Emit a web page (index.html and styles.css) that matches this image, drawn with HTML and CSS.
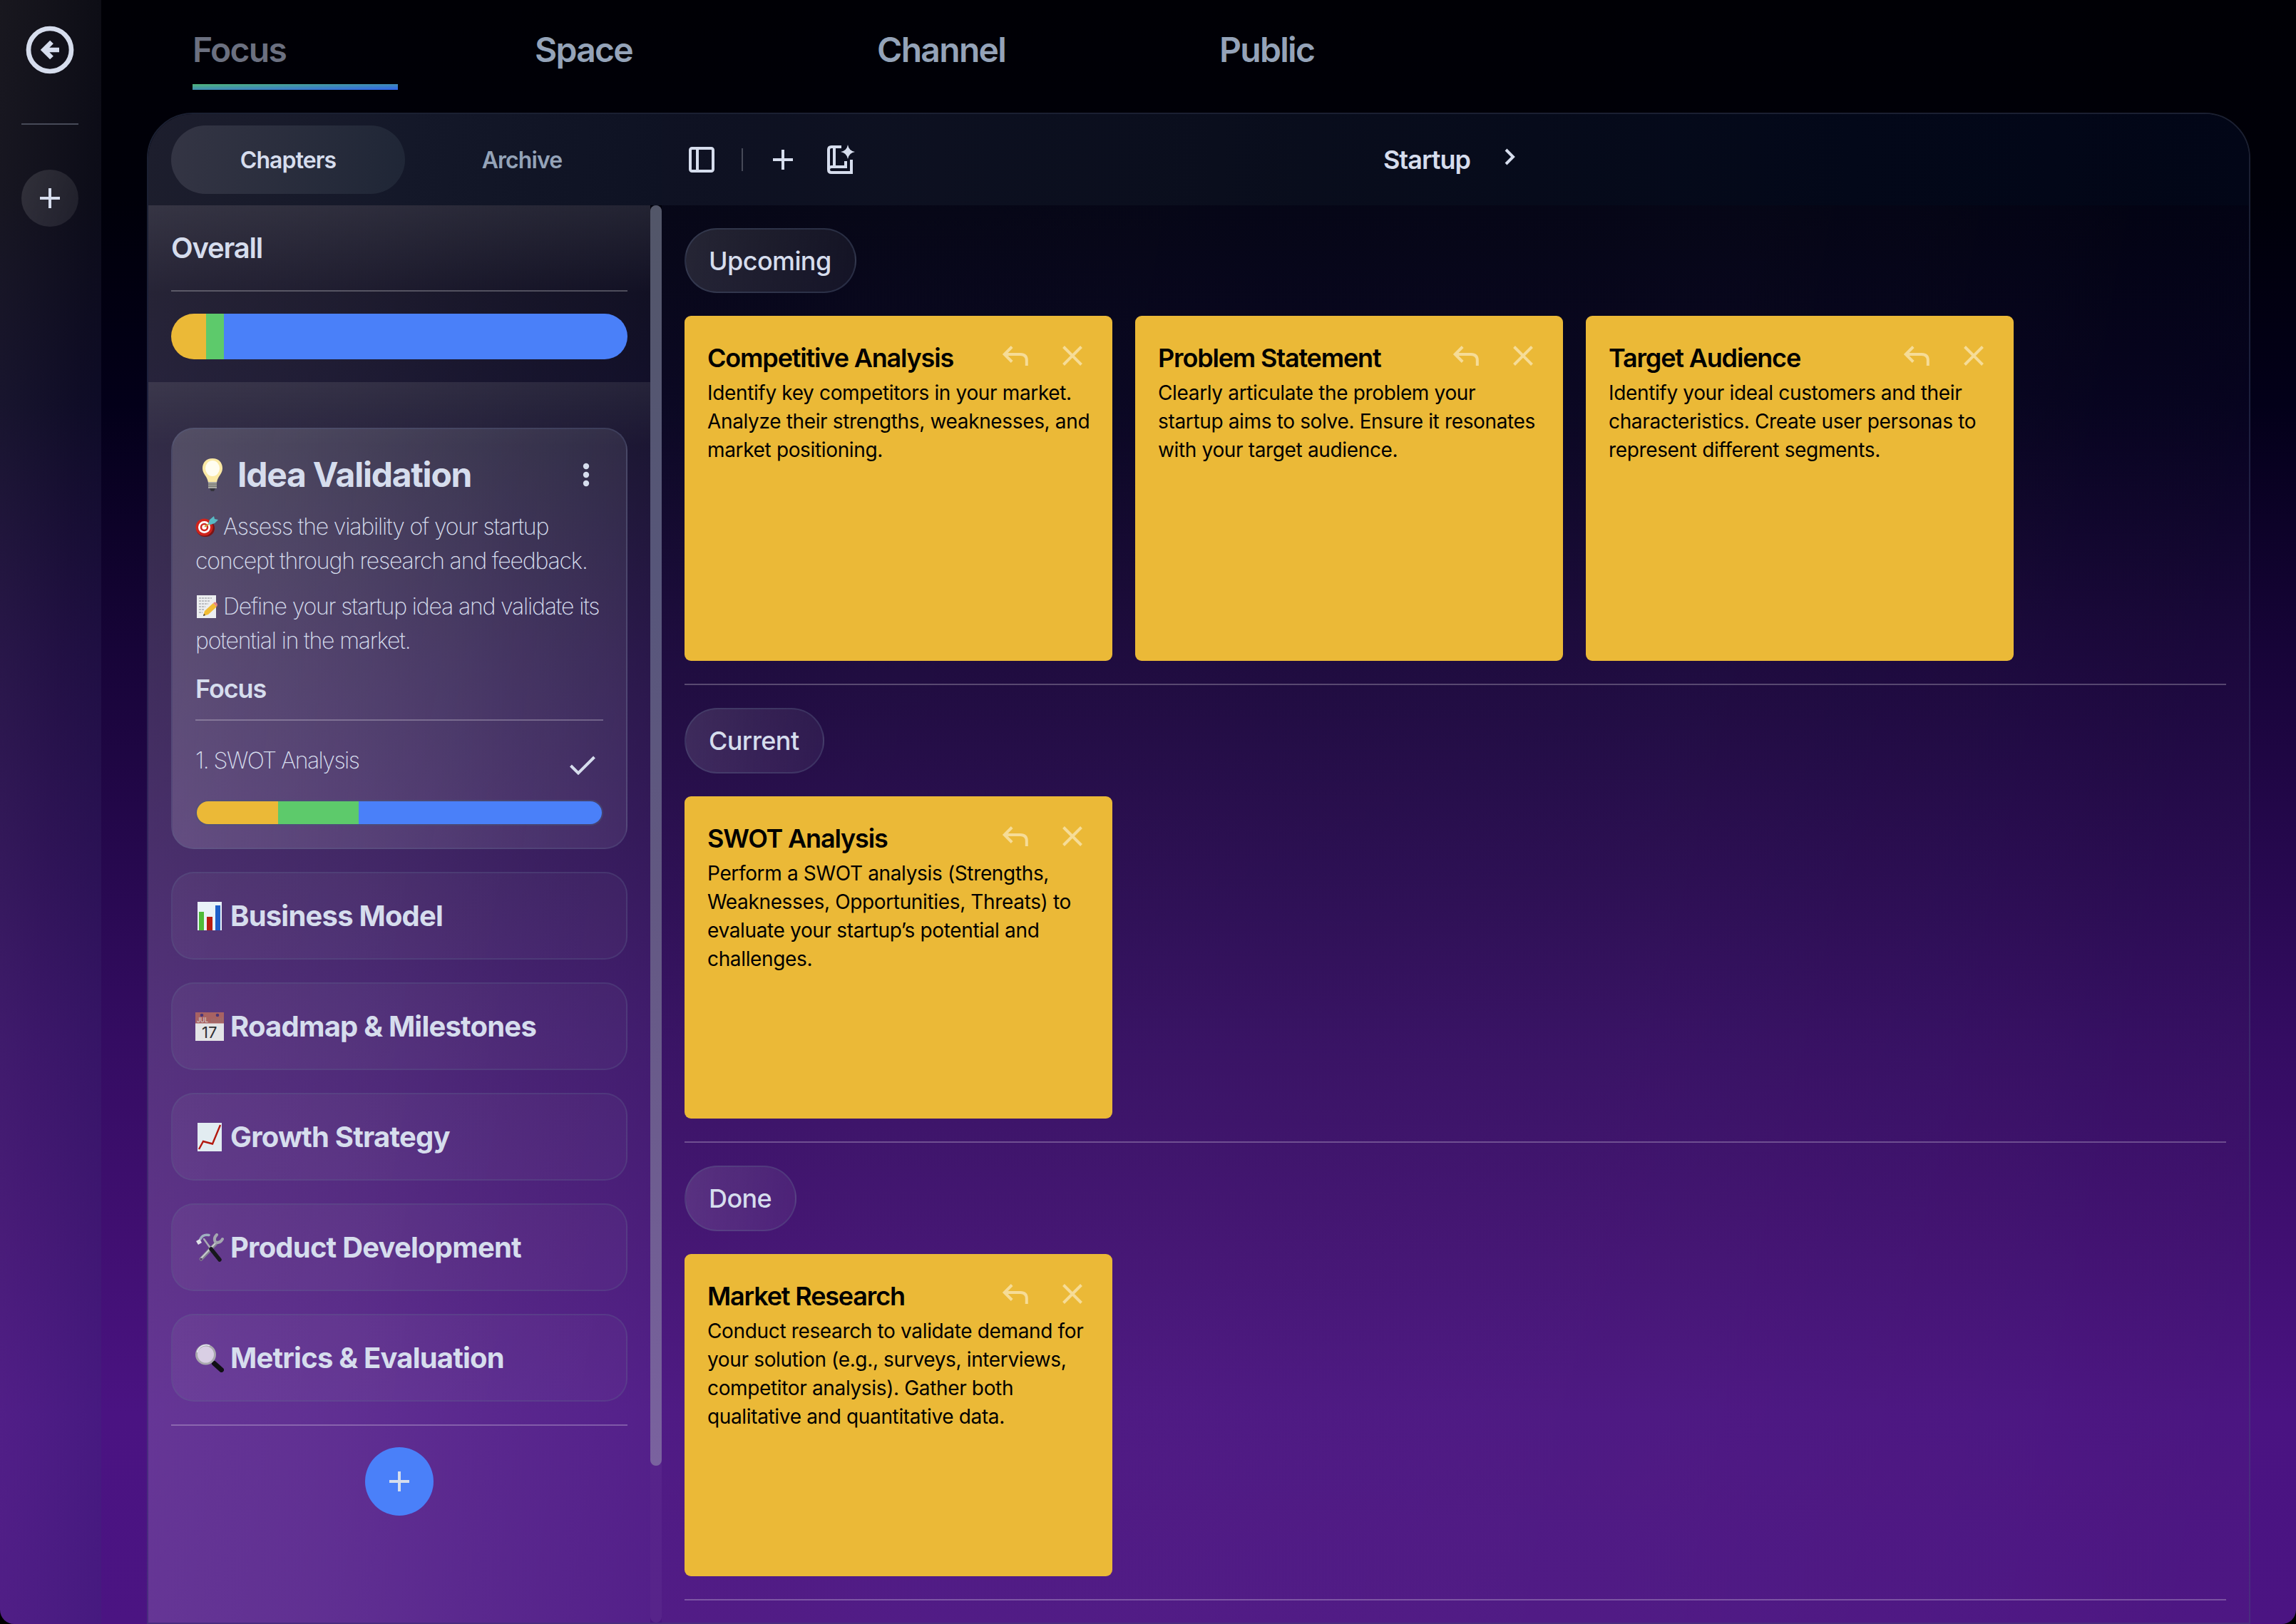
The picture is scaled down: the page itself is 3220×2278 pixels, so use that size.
FILE: index.html
```html
<!DOCTYPE html>
<html lang="en">
<head>
<meta charset="utf-8">
<title>Focus</title>
<link rel="stylesheet" href="styles.css">
</head>
<body>
<svg class="defs" aria-hidden="true">
  <symbol id="plus" viewBox="0 0 48 48"><path d="M24 10V38M10 24H38"/></symbol>
  <symbol id="close" viewBox="0 0 48 48"><path d="M11.5 11.5L36.5 36.5M36.5 11.5L11.5 36.5"/></symbol>
  <symbol id="reply" viewBox="0 0 48 48"><path d="M19.2 11.5L8.7 22L19.2 32.5M9 22H31Q39.8 22 39.8 30.5V38"/></symbol>
</svg>
<div class="app">
  <nav class="rail">
    <svg class="back" viewBox="0 0 68 68"><circle cx="34" cy="34" r="30"/><path d="M47 34H26M36.5 23L25.5 34L36.5 45"/></svg>
    <div class="rail-rule"></div>
    <button class="rail-add"><svg class="icon"><use href="#plus"/></svg></button>
  </nav>
  <div class="page">
    <div class="tabs">
      <div class="tab active">Focus</div>
      <div class="tab">Space</div>
      <div class="tab">Channel</div>
      <div class="tab">Public</div>
    </div>
    <div class="panel">
      <div class="side-head">
        <div class="seg on">Chapters</div>
        <div class="seg">Archive</div>
      </div>
      <div class="main-head">
        <div class="tools">
          <svg class="icon" viewBox="0 0 48 48"><rect x="8" y="8" width="32" height="32" rx="2.5"/><path d="M18 8V40"/></svg>
          <div class="tools-rule"></div>
          <svg class="icon"><use href="#plus"/></svg>
          <svg class="icon" viewBox="0 0 48 48"><path d="M26 6H12Q8 6 8 10V38Q8 42 12 42H40V24M16 6V34M12 34H32V26M8 38Q8 34 12 34"/><path class="solid" d="M35 3Q36.5 11.5 45 13Q36.5 14.500 35 23Q33.500 14.500 25 13Q33.500 11.500 35 3Z"/></svg>
        </div>
        <div class="crumb">Startup <svg class="icon chevron" viewBox="0 0 48 48"><path d="M18 14L28 24L18 34"/></svg></div>
      </div>
      <aside class="side">
        <div class="side-body">
          <section class="overall">
            <h2>Overall</h2>
            <div class="rule"></div>
            <div class="bar big"><i class="y" style="width:7.69%"></i><i class="g" style="width:3.85%"></i><i class="b"></i></div>
          </section>
          <section class="list">
            <article class="chapter open">
              <div class="chapter-head">
                <svg class="bulb" viewBox="0 0 48 48"><path d="M24 1C15 1 10 7 10 15C10 23 17 26 18 35H30C31 26 38 23 38 15C38 7 33 1 24 1Z" fill="#fbe9a4"/><ellipse cx="24" cy="15" rx="10" ry="11" fill="#fffdf0"/><path d="M18 34H30V43H18Z" fill="#a9a9a4"/><path d="M18 37H30M18 40H30" stroke="#77776f" stroke-width="1.500"/><path d="M20 43H28L26 47H22Z" fill="#34343c"/></svg>
                <h1>Idea Validation</h1>
                <svg class="icon dots" viewBox="0 0 48 48"><circle cx="24" cy="12" r="4.200"/><circle cx="24" cy="24" r="4.200"/><circle cx="24" cy="36" r="4.200"/></svg>
              </div>
              <p><svg class="emo" viewBox="0 0 32 32"><ellipse cx="14" cy="18" rx="13" ry="12" fill="#7d1414"/><circle cx="12.500" cy="16.500" r="12" fill="#d0241c"/><circle cx="12.500" cy="16.500" r="8.500" fill="#fff"/><circle cx="12.500" cy="16.500" r="5.800" fill="#cf2a22"/><circle cx="12.500" cy="16.500" r="3.200" fill="#fff"/><path d="M13 16L23 9" stroke="#c9a43a" stroke-width="2"/><path d="M18 12L20 6L26 1L27 5L32 6L27 11L21 13Z" fill="#58b9c4"/></svg>Assess the viability of your startup<br>concept through research and feedback.</p>
              <p><svg class="emo" viewBox="0 0 32 32"><path d="M2 0H29V32H2Z" fill="#eceef0"/><path d="M5 4H23M5 8H20M5 12H18M5 16H14M5 20H12M5 24H10" stroke="#8b8d94" stroke-width="1.200" stroke-dasharray="3 1"/><path d="M11 29L13 22L25 11L30 16L18 27Z" fill="#f2bd35"/><path d="M25 11L27 9.500Q31 10 31 14L30 16Z" fill="#e5837e"/><path d="M11 29L12 26L14 28Z" fill="#333"/></svg>Define your startup idea and validate its<br>potential in the market.</p>
              <h3>Focus</h3>
              <div class="rule"></div>
              <div class="task"><span>1. SWOT Analysis</span><svg class="icon" viewBox="0 0 48 48"><path d="M7.500 25L18 35.500L40.500 13"/></svg></div>
              <div class="bar small"><i class="y" style="width:20%"></i><i class="g" style="width:20%"></i><i class="b"></i></div>
            </article>
            <article class="chapter"><svg class="ico" viewBox="0 0 40 40"><path d="M3 0H37V40H3Z" fill="#e9f2f8"/><path d="M5 14H12V40H5Z" fill="#4fbb38"/><path d="M16 21H24V40H16Z" fill="#b81d12"/><path d="M28 5H35V40H28Z" fill="#1f5fc8"/></svg>Business Model</article>
            <article class="chapter"><svg class="ico" viewBox="0 0 40 40"><path d="M0 0H40V40H0Z" fill="#e4e4e6"/><path d="M0 0H40V15.500H0Z" fill="#a86262"/><circle cx="9" cy="4" r="2.300" fill="#4a3678"/><circle cx="31" cy="4" r="2.300" fill="#4a3678"/><path d="M23 9V14M26 8V14M29 9V14M32 8V14M35 8V14M38 7V14" stroke="#9a7070" stroke-width="1.200"/><text x="2" y="13.500" font-size="8.500" fill="#ddd">JUL</text><text x="9" y="35.500" font-size="22" fill="#2e2e30">17</text></svg>Roadmap &amp; Milestones</article>
            <article class="chapter"><svg class="ico" viewBox="0 0 40 40"><path d="M3 0H37V40H3Z" fill="#e2ecf1"/><path d="M5 37L11 26L24 29.500L35 3" fill="none" stroke="#b3190f" stroke-width="2.400"/></svg>Growth Strategy</article>
            <article class="chapter"><svg class="ico" viewBox="0 0 40 40"><g fill="none" stroke-linecap="round"><path d="M29 14L8 36" stroke="#85878f" stroke-width="5"/><path d="M28 14L8 35" stroke="#c8cad0" stroke-width="2"/><path d="M30 2Q25 7 28 12Q34 15 38 8" stroke="#a4a7b0" stroke-width="4"/><path d="M12 8L22 22" stroke="#a9abb3" stroke-width="2.500"/><path d="M22 22L34 37" stroke="#17171c" stroke-width="5.500"/><path d="M19 2.500Q10 1 7 8" stroke="#9fb0c0" stroke-width="3.500"/></g><path d="M1 11L6 8L9 13L4 16Z" fill="#dfe3e8"/><circle cx="8" cy="36" r="1.500" fill="#55386f"/></svg>Product Development</article>
            <article class="chapter"><svg class="ico" viewBox="0 0 40 40"><path d="M23 25L28 29" stroke="#888" stroke-width="4"/><path d="M26.500 27.500L36.500 36.500" stroke="#101014" stroke-width="7" stroke-linecap="round"/><circle cx="14.500" cy="15" r="13" fill="#d9cfe4" stroke="#a9a9ae" stroke-width="3"/><path d="M2.500 12A13 13 0 0 1 20 2.500" fill="none" stroke="#e8ebf5" stroke-width="1.500"/></svg>Metrics &amp; Evaluation</article>
            <div class="rule"></div>
            <button class="add"><svg class="icon"><use href="#plus"/></svg></button>
          </section>
        </div>
        <div class="track"><div class="thumb"></div></div>
      </aside>
      <main class="board">
        <section class="stage">
          <div class="pill">Upcoming</div>
          <div class="cards">
            <article class="note tall"><header><h4>Competitive Analysis</h4><svg class="icon"><use href="#reply"/></svg><svg class="icon"><use href="#close"/></svg></header>Identify key competitors in your market.<br>Analyze their strengths, weaknesses, and<br>market positioning.</article>
            <article class="note tall"><header><h4>Problem Statement</h4><svg class="icon"><use href="#reply"/></svg><svg class="icon"><use href="#close"/></svg></header>Clearly articulate the problem your<br>startup aims to solve. Ensure it resonates<br>with your target audience.</article>
            <article class="note tall"><header><h4>Target Audience</h4><svg class="icon"><use href="#reply"/></svg><svg class="icon"><use href="#close"/></svg></header>Identify your ideal customers and their<br>characteristics. Create user personas to<br>represent different segments.</article>
          </div>
        </section>
        <section class="stage">
          <div class="pill">Current</div>
          <div class="cards">
            <article class="note"><header><h4>SWOT Analysis</h4><svg class="icon"><use href="#reply"/></svg><svg class="icon"><use href="#close"/></svg></header>Perform a SWOT analysis (Strengths,<br>Weaknesses, Opportunities, Threats) to<br>evaluate your startup’s potential and<br>challenges.</article>
          </div>
        </section>
        <section class="stage">
          <div class="pill">Done</div>
          <div class="cards">
            <article class="note"><header><h4>Market Research</h4><svg class="icon"><use href="#reply"/></svg><svg class="icon"><use href="#close"/></svg></header>Conduct research to validate demand for<br>your solution (e.g., surveys, interviews,<br>competitor analysis). Gather both<br>qualitative and quantitative data.</article>
          </div>
        </section>
      </main>
    </div>
  </div>
</div>
</body>
</html>
```

FILE: styles.css
```css
* { box-sizing: border-box; margin: 0; padding: 0; }

body {
  height: 2278px;
  overflow: hidden;
  font-family: Inter, "Liberation Sans", sans-serif;
  color: #d6dded;
  background: #000;
}

.defs { display: none; }

.icon {
  width: 48px;
  height: 48px;
  flex: none;
  fill: none;
  stroke: currentColor;
  stroke-width: 4;
}
.solid { fill: currentColor; stroke: none; }

button { border: 0; color: inherit; display: grid; place-items: center; border-radius: 50%; }

.app {
  display: grid;
  grid-template-columns: 142px 1fr;
  height: 2278px;
  border-radius: 0 0 20px 20px;
  overflow: hidden;
  background: linear-gradient(180deg, #000005 0%, #000009 12%, #030019 25%, #170438 40%, #26084e 53%, #340c62 64%, #400f71 76%, #4a1382 87%, #4b1482 100%);
}

/* left rail */
.rail {
  display: flex;
  flex-direction: column;
  align-items: center;
  padding: 36px 2px 0 0;
  background: linear-gradient(94deg, rgba(225, 215, 240, .11), rgba(140, 140, 180, .09) 50%, rgba(40, 60, 110, .14));
}
.back { width: 68px; height: 68px; fill: none; stroke: currentColor; stroke-width: 6.700; }
.rail-rule { width: 80px; height: 2px; margin: 69px 0 63px; background: #474a58; }
.rail-add { width: 80px; height: 80px; background: linear-gradient(110deg, rgba(255, 255, 255, .12), rgba(255, 255, 255, .07)); }

.page { display: grid; grid-template-rows: 158px 1fr; padding: 0 64px; min-height: 0; }

/* top tabs */
.tabs { display: flex; gap: 192px; padding-left: 64px; }
.tab {
  width: 288px;
  height: 126px;
  padding-top: 38px;
  font-size: 48px;
  font-weight: 600;
  line-height: 64px;
  letter-spacing: -1.700px;
  color: #94a3b8;
}
.tab.active {
  color: #6b7080;
  background: linear-gradient(to bottom right, #50b678, #2f63ee) bottom / 100% 8px no-repeat;
}

/* panel */
.panel {
  display: grid;
  grid-template: 128px 1fr / 720px 1fr;
  border: 2px solid rgba(71, 85, 120, .38);
  border-radius: 64px 64px 0 0;
  overflow: hidden;
  min-height: 0;
}

.side-head {
  display: flex;
  padding: 16px 32px 0;
  background: linear-gradient(100deg, #1d1e2d, #141829 50%, #0e1223);
}
.seg {
  width: 328px;
  height: 96px;
  border-radius: 48px;
  font-size: 32px;
  font-weight: 600;
  line-height: 97px;
  letter-spacing: -.9px;
  text-align: center;
  color: #94a3b8;
}
.seg.on { color: #d6dded; background: linear-gradient(100deg, #343544, #1f2636); }

.main-head {
  display: grid;
  grid-template-columns: 1fr auto 1fr;
  align-items: center;
  padding: 0 32px;
  background: linear-gradient(90deg, #0f1223, #0a0e1d 35%, #030819 75%, #020617);
}
.tools { display: flex; align-items: center; gap: 32px; }
.tools-rule { width: 2px; height: 32px; background: #474a58; }
.crumb { display: flex; align-items: center; gap: 32px; font-size: 36px; font-weight: 600; letter-spacing: -1px; }
.chevron { margin-bottom: 8px; }

/* chapters column */
.side { display: flex; min-height: 0; }
.side-body { width: 704px; display: flex; flex-direction: column; }
.rule { height: 2px; background: rgba(255, 255, 255, .25); }

.overall {
  height: 248px;
  padding: 32px 32px 0;
  background:
    linear-gradient(180deg, rgba(215, 220, 255, .09), rgba(220, 220, 255, 0) 50%),
    linear-gradient(100deg, rgba(235, 225, 255, .16), rgba(200, 200, 255, .08));
}
.overall h2 { font-size: 40px; font-weight: 600; line-height: 56px; letter-spacing: -1.200px; margin-bottom: 31px; }

.bar { display: flex; overflow: hidden; }
.bar.big { height: 64px; margin-top: 31px; border-radius: 32px; }
.bar.small { height: 36px; border: 2px solid rgba(71, 85, 120, .5); border-radius: 18px; }
.y { background: #ebb937; }
.g { background: #5dca6b; }
.b { background: #4a80f9; flex: 1; }

.list {
  flex: 1;
  display: flex;
  flex-direction: column;
  gap: 32px;
  padding: 64px 32px 0;
  background:
    linear-gradient(180deg, rgba(255, 255, 255, .06), rgba(255, 255, 255, 0) 90px),
    linear-gradient(98deg, rgba(250, 240, 255, .18), rgba(240, 235, 255, .13) 50%, rgba(220, 220, 255, .06) 100%);
}
.list > .rule { margin-bottom: -2px; flex: none; }

.chapter {
  flex: none;
  display: flex;
  align-items: center;
  height: 123px;
  padding: 0 32px;
  border: 2px solid rgba(90, 98, 140, .3);
  border-radius: 32px;
  font-size: 40px;
  font-weight: 700;
  letter-spacing: -.8px;
  background: linear-gradient(100deg, rgba(255, 255, 255, .05), rgba(255, 255, 255, .03));
}
.ico { width: 40px; height: 40px; margin-right: 9px; letter-spacing: 0; font-weight: 400; }

.chapter.open {
  display: block;
  height: 591px;
  padding: 34px 32px 32px;
  background: linear-gradient(100deg, rgba(250, 250, 255, .17), rgba(240, 245, 255, .08));
}
.chapter-head { display: flex; align-items: center; height: 60px; margin-bottom: 19px; }
.bulb { width: 48px; height: 48px; }
.chapter-head h1 { flex: 1; margin-left: 11px; font-size: 48px; font-weight: 700; line-height: 60px; letter-spacing: -1.250px; }
.dots { fill: currentColor; stroke: none; }
.chapter p {
  margin-bottom: 16px;
  font-size: 32px;
  font-weight: 200;
  line-height: 48px;
  letter-spacing: -1.180px;
  white-space: nowrap;
}
.emo { width: 32px; height: 32px; margin-right: 7px; vertical-align: -5px; }
.chapter h3 { font-size: 36px; font-weight: 600; line-height: 54px; letter-spacing: -1.100px; margin-bottom: 16px; }
.task {
  display: flex;
  justify-content: space-between;
  height: 79px;
  margin: 32px 0 0;
  font-size: 32px;
  font-weight: 200;
  line-height: 48px;
  letter-spacing: -1.500px;
}
.task .icon { margin: 6px 5px 0 0; }

.add { width: 96px; height: 96px; align-self: center; background: #4a80f9; }

.track { width: 16px; border-radius: 8px; background: rgba(255, 255, 255, .07); }
.thumb { height: 1768px; border-radius: 8px; background: linear-gradient(#525668, #57567a 30%, #625882 55%, #7a629f); }

/* board */
.board {
  display: flex;
  flex-direction: column;
  gap: 32px;
  padding: 32px 32px 0;
  background:
    linear-gradient(100deg, rgba(255, 255, 255, .025), rgba(255, 255, 255, .02) 60%, rgba(255, 255, 255, 0)),
    linear-gradient(180deg, rgba(2, 4, 36, .3), rgba(40, 24, 70, .15) 30%, rgba(100, 50, 140, .1));
}
.stage { display: flex; flex-direction: column; align-items: flex-start; padding-bottom: 32px; border-bottom: 2px solid rgba(255, 255, 255, .25); }
.pill {
  height: 91px;
  padding: 0 33px 0 32px;
  margin-bottom: 32px;
  border: 2px solid rgba(90, 105, 140, .3);
  border-radius: 46px;
  font-size: 36px;
  font-weight: 500;
  line-height: 88px;
  letter-spacing: -.6px;
  background: linear-gradient(100deg, rgba(255, 255, 255, .12), rgba(255, 255, 255, .05));
}
.stage + .stage .pill { height: 92px; }
.cards { display: flex; gap: 32px; }
.note {
  width: 600px;
  height: 452px;
  padding: 31px 32px 30px;
  border-radius: 9px;
  background: #ebb937;
  color: #000;
  font-size: 28px;
  line-height: 40px;
  letter-spacing: -.35px;
  white-space: nowrap;
}
.note.tall { height: 484px; }
.note header { display: flex; gap: 32px; height: 57px; }
.note h4 { flex: 1; font-size: 36px; font-weight: 600; line-height: 56px; letter-spacing: -1.170px; }
.note .icon { margin-top: 1px; color: #f6dc97; }
```
